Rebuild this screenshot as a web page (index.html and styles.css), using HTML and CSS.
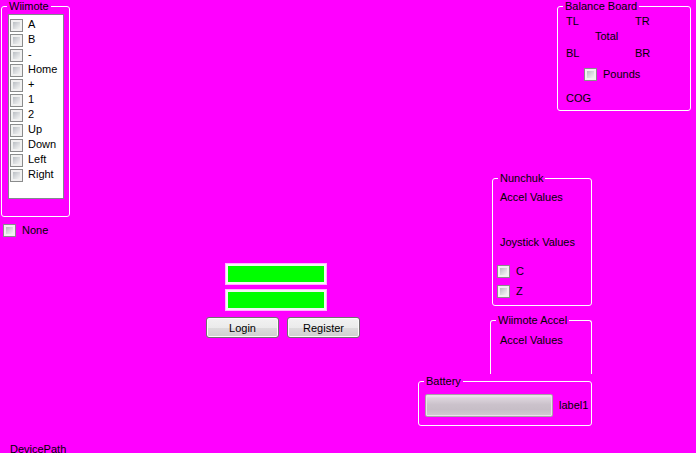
FILE: index.html
```html
<!DOCTYPE html>
<html>
<head>
<meta charset="utf-8">
<link rel="stylesheet" href="styles.css">
</head>
<body>
<div class="form">
  <div class="col-left">
    <fieldset class="group wiimote">
      <legend>Wiimote</legend>
      <ul class="listbox">
        <li><span class="cb"></span>A</li>
        <li><span class="cb"></span>B</li>
        <li><span class="cb"></span>-</li>
        <li><span class="cb"></span>Home</li>
        <li><span class="cb"></span>+</li>
        <li><span class="cb"></span>1</li>
        <li><span class="cb"></span>2</li>
        <li><span class="cb"></span>Up</li>
        <li><span class="cb"></span>Down</li>
        <li><span class="cb"></span>Left</li>
        <li><span class="cb"></span>Right</li>
      </ul>
    </fieldset>
    <div class="check none"><span class="cb"></span>None</div>
    <div class="devpath">DevicePath</div>
  </div>

  <div class="col-login">
    <div class="textbox"></div>
    <div class="textbox second"></div>
    <div class="buttons">
      <button class="btn">Login</button>
      <button class="btn">Register</button>
    </div>
  </div>

  <div class="col-right">
    <fieldset class="group balance">
      <legend>Balance Board</legend>
      <div class="bal-row first"><span class="corner">TL</span><span>TR</span></div>
      <div class="total">Total</div>
      <div class="bal-row bl"><span class="corner">BL</span><span>BR</span></div>
      <div class="check pounds"><span class="cb"></span>Pounds</div>
      <div class="cog">COG</div>
    </fieldset>

    <fieldset class="group nunchuk">
      <legend>Nunchuk</legend>
      <div class="lbl accel">Accel Values</div>
      <div class="lbl joy">Joystick Values</div>
      <div class="check nc c"><span class="cb"></span>C</div>
      <div class="check nc z"><span class="cb"></span>Z</div>
    </fieldset>

    <fieldset class="group waccel">
      <legend>Wiimote Accel</legend>
      <div class="lbl wa">Accel Values</div>
    </fieldset>

    <fieldset class="group battery">
      <legend>Battery</legend>
      <div class="bat-row">
        <div class="progress"></div>
        <span class="bat-label">label1</span>
      </div>
    </fieldset>
  </div>
</div>
</body>
</html>
```

FILE: styles.css
```css
* { box-sizing: border-box; }

html, body {
  margin: 0;
  padding: 0;
}

body {
  background: #ff00ff;
  font-family: "Liberation Sans", Arial, sans-serif;
  font-size: 11px;
  line-height: 13px;
  color: #000000;
  overflow: hidden;
}

.form {
  display: flex;
  align-items: flex-start;
  width: 696px;
  height: 453px;
  overflow: hidden;
}

/* group boxes */
.group {
  margin: 0;
  padding: 0;
  min-width: 0;
  border: 1px solid #ffffff;
  border-radius: 3px;
}

.group legend {
  padding: 0 2px;
  margin-left: 5px;
  line-height: 13px;
  font-size: 11px;
}

/* checkbox glyph */
.cb {
  display: inline-block;
  flex: none;
  width: 13px;
  height: 13px;
  border: 1px solid #8a8b8c;
  padding: 2px;
  background: linear-gradient(135deg, #b9bdc3 0%, #d8dadd 50%, #f4f4f4 100%) content-box, #f1f1f1;
}

.check {
  display: flex;
  align-items: center;
  height: 13px;
}

.check .cb { margin-right: 6px; }

/* left column */
.col-left {
  display: flex;
  flex-direction: column;
  width: 72px;
  height: 453px;
  flex: none;
}

.wiimote {
  margin-left: 1px;
  width: 69px;
  height: 217px;
}

.listbox {
  list-style: none;
  margin: 1px 0 0 6px;
  padding: 3px 0 0 1px;
  width: 56px;
  height: 185px;
  background: #ffffff;
  border: 1px solid #828790;
}

.listbox li {
  display: flex;
  align-items: flex-start;
  height: 15px;
  line-height: 13px;
}

.listbox li .cb {
  margin: 1px 5px 0 0;
}

.none {
  margin: 7px 0 0 3px;
}

.devpath {
  margin-top: auto;
  margin-bottom: -3px;
  padding-left: 10px;
}

/* login column */
.col-login {
  flex: none;
  width: 154px;
  margin-left: 134px;
  padding-top: 264px;
  display: flex;
  flex-direction: column;
}

.textbox {
  width: 100px;
  height: 20px;
  margin-left: 20px;
  background: #00ff00;
  border: 2px solid #f4f4f4;
  box-shadow: 0 0 0 1px #ffb4ff;
}

.textbox.second { margin-top: 6px; }

.buttons {
  display: flex;
  gap: 8px;
  margin-top: 7px;
}

.btn {
  width: 73px;
  height: 21px;
  padding: 0;
  font-family: "Liberation Sans", Arial, sans-serif;
  font-size: 11px;
  color: #000;
  border: 1px solid #707070;
  border-radius: 3px;
  background: linear-gradient(#f2f2f2 0%, #ebebeb 50%, #dddddd 51%, #cfcfcf 100%);
  box-shadow: inset 0 0 0 1px #fbfbfb;
}

/* right column */
.col-right {
  flex: none;
  width: 278px;
  margin-left: 58px;
  display: flex;
  flex-direction: column;
  align-items: flex-start;
}

.balance {
  margin-left: 139px;
  width: 134px;
  height: 111px;
}

.bal-row {
  display: flex;
  padding-left: 8px;
}

.bal-row.first { margin-top: 2px; }
.bal-row.bl { margin-top: 4px; }

.corner { width: 69px; }

.total {
  margin: 2px 0 0 37px;
}

.pounds {
  margin: 8px 0 0 26px;
}

.cog {
  margin: 11px 0 0 8px;
}

.nunchuk {
  margin: 61px 0 0 74px;
  width: 100px;
  height: 134px;
}

.lbl { padding-left: 7px; }
.accel { margin-top: 6px; }
.joy { margin-top: 32px; }

.nc { margin-left: 4px; }
.nc.c { margin-top: 16px; }
.nc.z { margin-top: 7px; }

.waccel {
  margin: 8px 0 0 72px;
  width: 102px;
  height: 60px;
  border-bottom: 0;
  border-radius: 3px 3px 0 0;
}

.lbl.wa {
  padding-left: 9px;
  margin-top: 7px;
}

.battery {
  margin-top: 1px;
  width: 174px;
  height: 51px;
}

.bat-row {
  display: flex;
  align-items: center;
  margin: 6px 0 0 6px;
}

.progress {
  width: 128px;
  height: 23px;
  border: 1px solid #a9a2a9;
  border-radius: 2px;
  background: linear-gradient(#f4eff4 0%, #ddd5dd 3px, #cbc2cb 45%, #c7bec7 70%, #d2cad2 100%);
  box-shadow: inset 0 0 0 1px #e9e3e9;
}

.bat-label {
  margin-left: 6px;
}
```
